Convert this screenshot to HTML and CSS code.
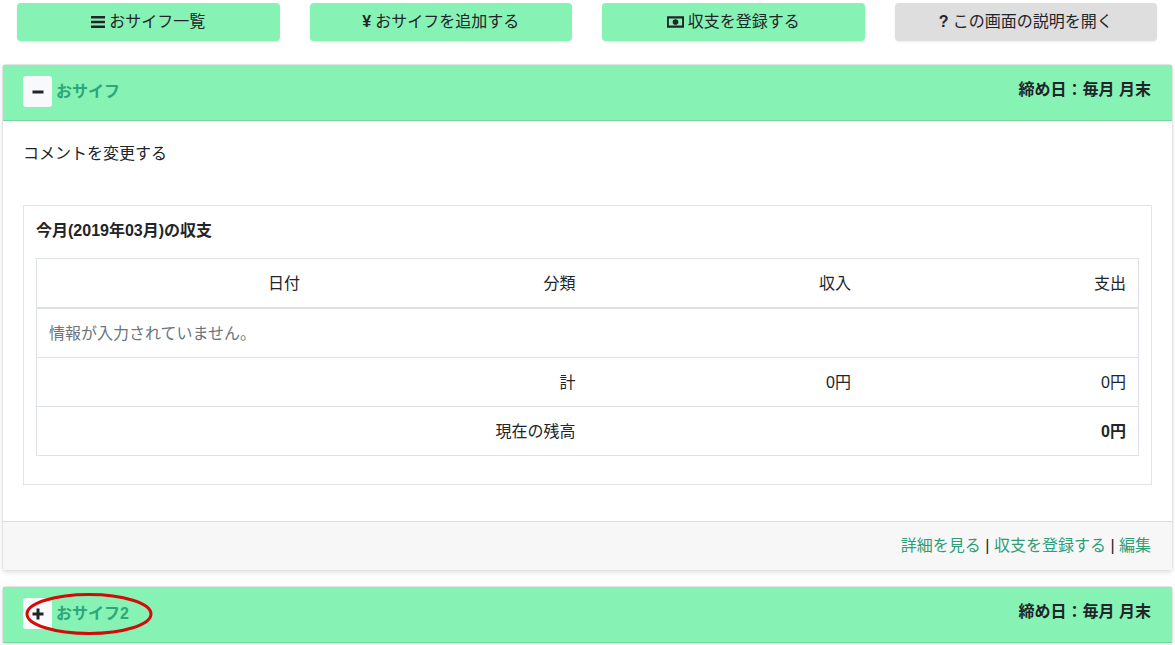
FILE: index.html
```html
<!DOCTYPE html>
<html lang="ja">
<head>
<meta charset="utf-8">
<title>おサイフ</title>
<link rel="stylesheet" href="styles.css">
</head>
<body>
<nav class="actions">
  <a class="btn"><svg class="ico" viewBox="0 0 14 12"><path d="M0 0h14v2.4H0zM0 4.8h14v2.4H0zM0 9.6h14V12H0z"/></svg>おサイフ一覧</a>
  <a class="btn"><span class="glyph">¥</span>おサイフを追加する</a>
  <a class="btn"><svg class="ico money" viewBox="0 0 18 12"><path fill-rule="evenodd" d="M0 0h18v12H0zM2 2.2v7.6h14V2.2zM9 3a3 3 0 1 1 0 6 3 3 0 0 1 0-6z"/></svg>収支を登録する</a>
  <a class="btn btn-gray"><span class="glyph">?</span>この画面の説明を開く</a>
</nav>

<section class="card">
  <header class="card-head">
    <div class="head-left"><span class="toggle"><svg class="sign" viewBox="0 0 12 12"><path d="M0.5 4.5h11v3h-11z"/></svg></span><a class="title">おサイフ</a></div>
    <div class="closing">締め日：毎月 月末</div>
  </header>
  <div class="card-body">
    <p class="comment">コメントを変更する</p>
    <div class="inner">
      <h2 class="inner-title">今月(2019年03月)の収支</h2>
      <table class="tbl">
        <thead>
          <tr><th class="c1">日付</th><th class="c2">分類</th><th class="c3">収入</th><th class="c4">支出</th></tr>
        </thead>
        <tbody>
          <tr><td colspan="4" class="empty">情報が入力されていません。</td></tr>
          <tr><td></td><td>計</td><td>0円</td><td>0円</td></tr>
          <tr><td></td><td>現在の残高</td><td></td><td class="strong">0円</td></tr>
        </tbody>
      </table>
    </div>
  </div>
  <footer class="card-foot"><a>詳細を見る</a> | <a>収支を登録する</a> | <a>編集</a></footer>
</section>

<section class="card card-second">
  <header class="card-head">
    <div class="head-left"><span class="toggle"><svg class="sign" viewBox="0 0 12 12"><path d="M4.5 0.5h3v4h4v3h-4v4h-3v-4h-4v-3h4z"/></svg></span><a class="title">おサイフ2</a></div>
    <div class="closing">締め日：毎月 月末</div>
  </header>
  <svg class="circle" viewBox="0 0 128 44"><ellipse cx="64" cy="22" rx="62" ry="19.5"/></svg>
</section>
</body>
</html>
```
FILE: styles.css
```css
* { box-sizing: border-box; }
html, body { margin: 0; height: 645px; overflow: hidden; }
body {
  padding: 3px 2px 0 2px;
  background: #fff;
  color: #212529;
  font: 16px/24px "Liberation Sans", "Noto Sans CJK JP", sans-serif;
}
.actions {
  display: grid;
  grid-template-columns: repeat(4, 1fr);
  column-gap: 30px;
  padding: 0 16px 0 15px;
  margin-bottom: 23px;
}
.btn {
  display: flex;
  align-items: center;
  justify-content: center;
  gap: 4px;
  height: 38px;
  border-radius: 4px;
  background: #86f3b5;
  box-shadow: 0 1px 2px rgba(0,0,0,.08);
  color: #212529;
}
.btn-gray { background: #dedede; }
.ico { width: 14px; height: 12px; fill: #212529; }
.money { width: 17px; }
.glyph { font-weight: 700; font-size: 16px; }
.card {
  border: 1px solid #e3e3e3;
  border-radius: 4px;
  background: #fff;
  box-shadow: 0 2px 4px rgba(0,0,0,.1);
}
.card-head {
  display: flex;
  justify-content: space-between;
  align-items: flex-start;
  height: 56px;
  padding: 11px 21px 11px 20px;
  background: #86f3b5;
  border-bottom: 1px solid #77d6a0;
}
.head-left { display: flex; align-items: center; gap: 4px; }
.toggle {
  display: flex;
  align-items: center;
  justify-content: center;
  width: 29px;
  height: 31px;
  border-radius: 3px;
  background: #f8f9fa;
}
.sign { width: 12px; height: 12px; fill: #212529; }
.title { font-weight: 700; color: #2ea57a; }
.closing { font-weight: 700; margin-top: 2px; }
.card-body { padding: 21px 20px 20px; height: 400px; }
.comment { margin: 0 0 39px; }
.inner { border: 1px solid #e3e3e3; padding: 13px 12px 12px; height: 280px; }
.inner-title { margin: 0 0 15px; font-size: 16px; line-height: 24px; font-weight: 700; }
.tbl {
  width: 100%;
  border-collapse: collapse;
  table-layout: fixed;
  border: 1px solid #dee2e6;
}
.tbl th, .tbl td {
  padding: 13px 12px 11px;
  height: 49px;
  text-align: right;
  font-weight: 400;
  border-top: 1px solid #dee2e6;
}
.tbl thead th { border-bottom: 2px solid #dee2e6; }
.c1, .c2, .c3, .c4 { width: 25%; }
.tbl .empty { text-align: left; color: #6c757d; }
.tbl .strong { font-weight: 700; }
.card-foot {
  height: 49px;
  padding: 12px 21px 12px 20px;
  text-align: right;
  background: #f7f7f7;
  border-top: 1px solid #dcdcdc;
}
.card-foot a { color: #2e9e78; }
.card-second { position: relative; margin-top: 15px; }
.circle {
  position: absolute;
  left: 22px;
  top: 5px;
  width: 128px;
  height: 44px;
  fill: none;
  stroke: #d40a0a;
  stroke-width: 3;
}
```
